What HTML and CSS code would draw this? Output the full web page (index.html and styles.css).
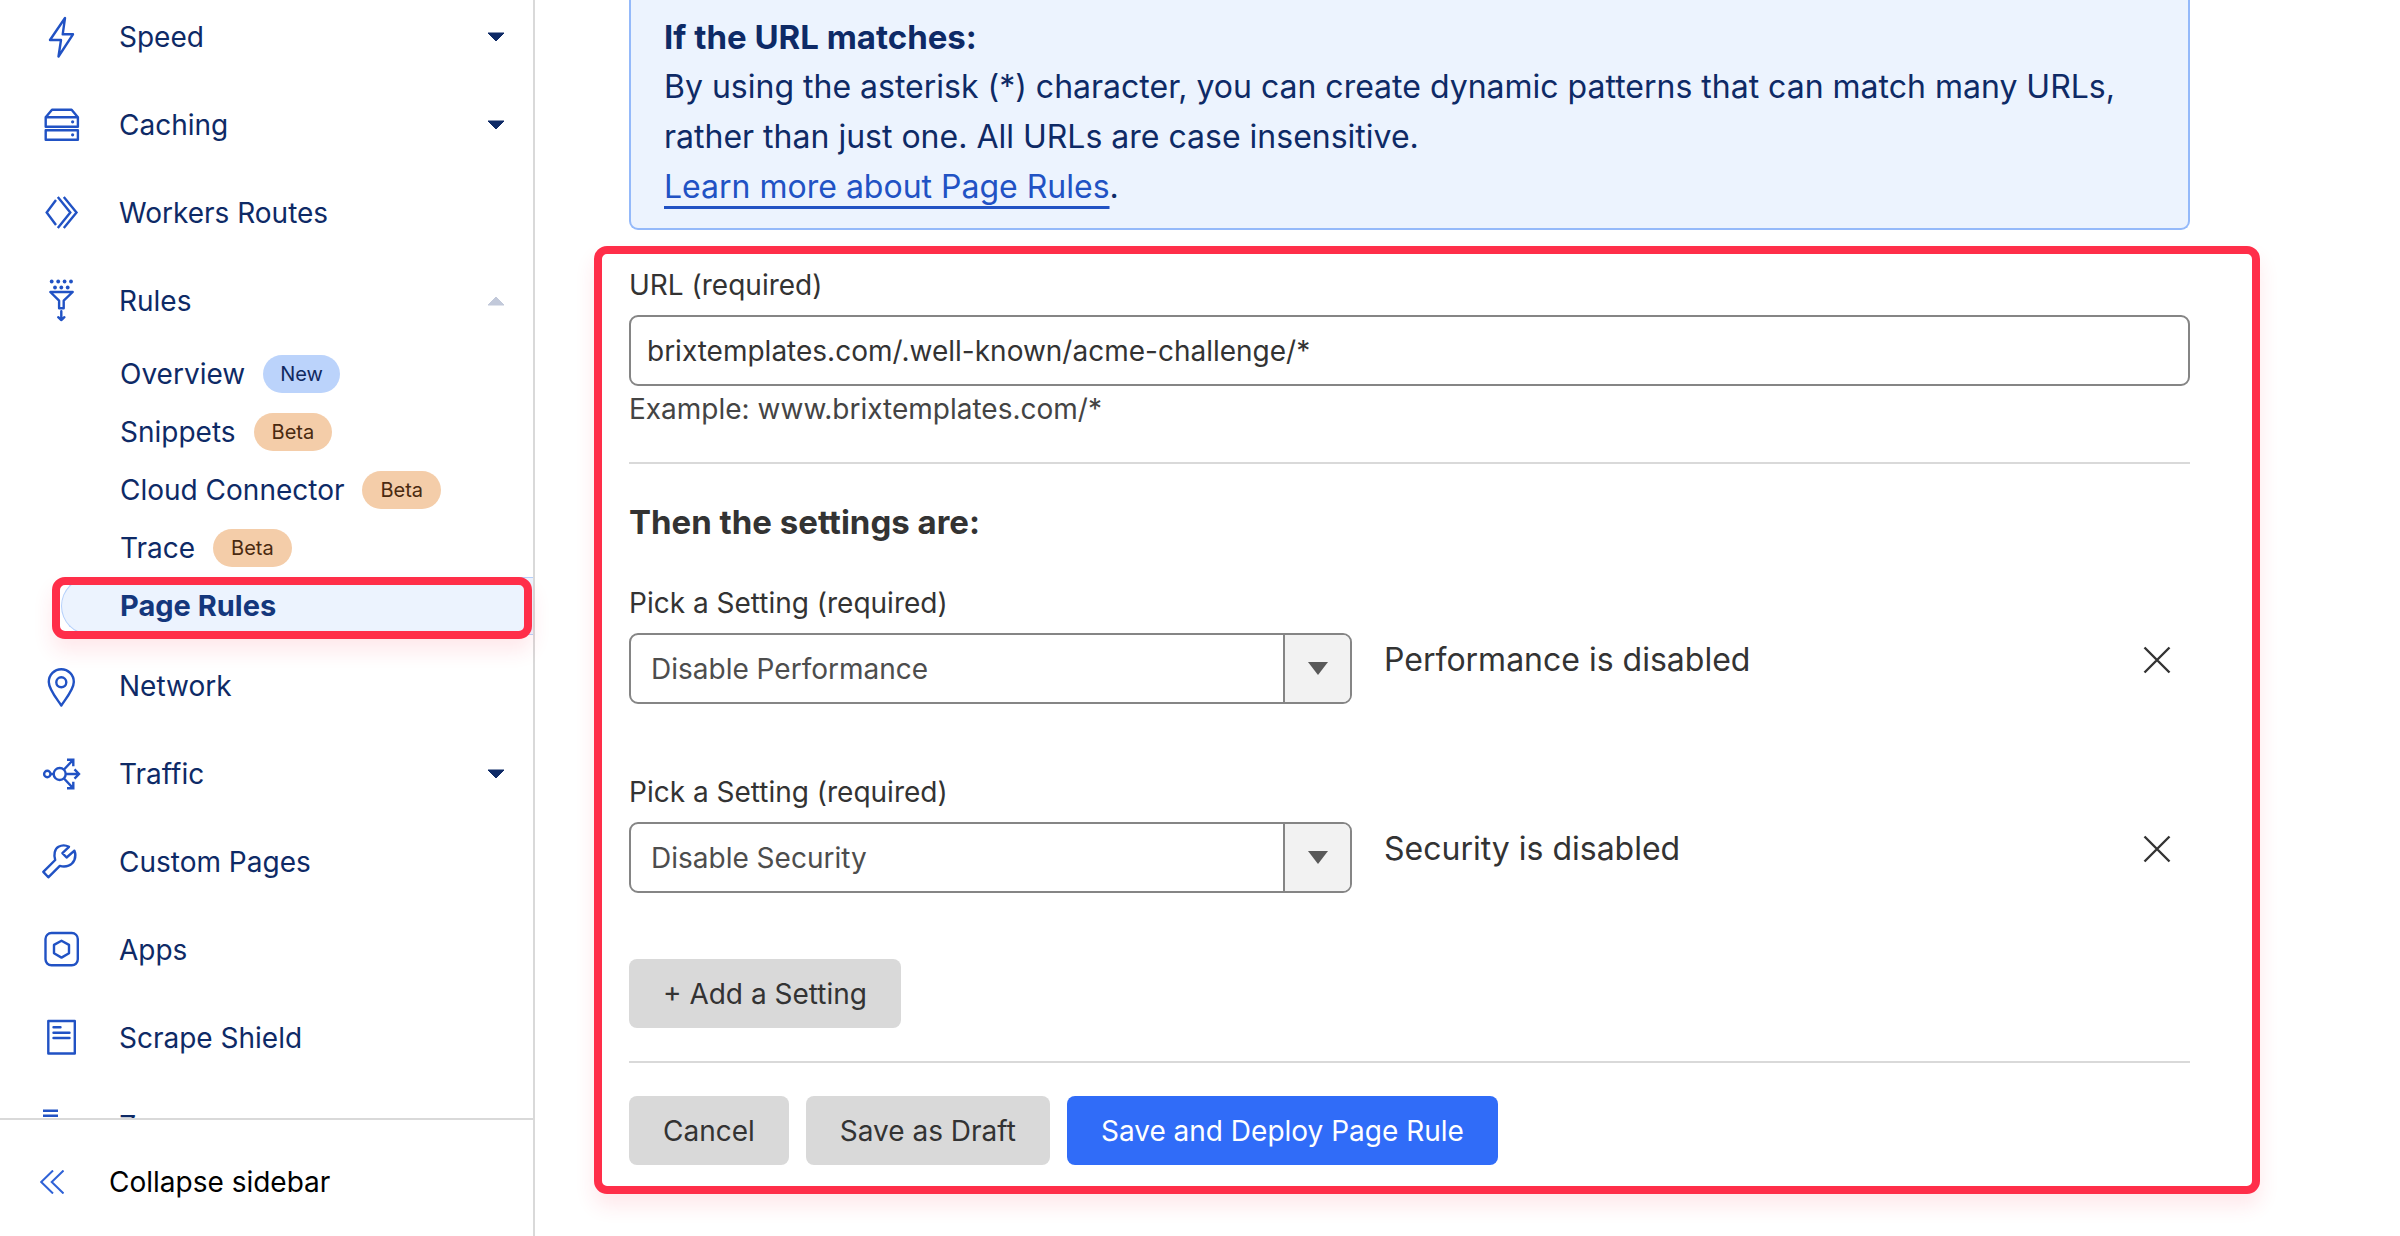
FILE: index.html
```html
<!DOCTYPE html>
<html lang="en">
<head>
<meta charset="utf-8">
<meta name="viewport" content="width=device-width, initial-scale=1">
<title>Page Rules</title>
<link rel="stylesheet" href="styles.css">
</head>
<body>
<div class="app">
  <aside class="sidebar">
    <nav class="nav" aria-label="Zone">
      <ul class="nav-list">
        <li>
          <button class="nav-row" type="button" aria-expanded="false">
            <svg class="icon" viewBox="0 0 44 44"><path d="M26 3 23.7 19.3H34L19.5 41.5 22 25H11z"/></svg>
            <span class="nav-label">Speed</span>
            <svg class="caret" viewBox="0 0 18 10"><path d="M1 1h16L9 9z"/></svg>
          </button>
        </li>
        <li>
          <button class="nav-row" type="button" aria-expanded="false">
            <svg class="icon" viewBox="0 0 44 44"><path d="M6.7 14.3 13 6.7h19.6l6.3 7.6v9.4H6.7zM6.7 14.3h32.2M6.7 27.3h32.2v9.4H6.7z"/><circle class="solid" cx="33.6" cy="18.8" r="1.6"/><circle class="solid" cx="33.6" cy="31.8" r="1.6"/></svg>
            <span class="nav-label">Caching</span>
            <svg class="caret" viewBox="0 0 18 10"><path d="M1 1h16L9 9z"/></svg>
          </button>
        </li>
        <li>
          <a class="nav-row" href="#workers">
            <svg class="icon icon-flat" viewBox="0 0 44 44"><path d="M17 9 7.7 21.5 17 34M18.8 6l12.5 15.5L18.8 37M24.8 6l12.7 15.5L24.8 37"/></svg>
            <span class="nav-label">Workers Routes</span>
          </a>
        </li>
        <li>
          <button class="nav-row" type="button" aria-expanded="true">
            <svg class="icon" viewBox="0 0 44 44"><g class="solid"><circle cx="12.7" cy="2.5" r="1.9"/><circle cx="19.2" cy="2.5" r="1.9"/><circle cx="25.6" cy="2.5" r="1.9"/><circle cx="32" cy="2.5" r="1.9"/><circle cx="16" cy="8.5" r="1.9"/><circle cx="22.3" cy="8.5" r="1.9"/><circle cx="28.7" cy="8.5" r="1.9"/></g><path d="M11.3 13h22.4l-9 8.7v7.6h-4.6v-7.6zM22.3 32.3V41M19.2 38.2l3.1 2.8 3.1-2.8"/></svg>
            <span class="nav-label">Rules</span>
            <svg class="caret caret-open" viewBox="0 0 18 10"><path d="M1 9h16L9 1z"/></svg>
          </button>
          <ul class="subnav">
            <li><a class="sub-row" href="#overview">Overview <span class="badge badge-new">New</span></a></li>
            <li><a class="sub-row" href="#snippets">Snippets <span class="badge badge-beta">Beta</span></a></li>
            <li><a class="sub-row" href="#connector">Cloud Connector <span class="badge badge-beta">Beta</span></a></li>
            <li><a class="sub-row" href="#trace">Trace <span class="badge badge-beta">Beta</span></a></li>
            <li class="current"><a class="sub-row" href="#page-rules" aria-current="page">Page Rules</a></li>
          </ul>
        </li>
        <li>
          <a class="nav-row" href="#network">
            <svg class="icon" viewBox="0 0 44 44"><path d="M22.3 41.5C18 35 9.8 25.5 9.8 18a12.5 12.8 0 0 1 25 0c0 7.5-8.2 17-12.5 23.5z"/><circle cx="22.3" cy="18.3" r="5"/></svg>
            <span class="nav-label">Network</span>
          </a>
        </li>
        <li>
          <button class="nav-row" type="button" aria-expanded="false">
            <svg class="icon icon-flat" viewBox="0 0 44 44"><circle cx="8.3" cy="22" r="3.2"/><circle cx="20.7" cy="22" r="6"/><path d="M11.5 22h3.2M26.7 22h13M35.5 17.3l4.5 4.7-4.5 4.7M25 17.5l9.3-9.8M28 7.7h6.3v6.6M25 26.5l9.3 9.8M28 36.3h6.3v-6.6"/></svg>
            <span class="nav-label">Traffic</span>
            <svg class="caret" viewBox="0 0 18 10"><path d="M1 1h16L9 9z"/></svg>
          </button>
        </li>
        <li>
          <a class="nav-row" href="#custom-pages">
            <svg class="icon" viewBox="0 0 44 44"><path d="M16.2 20 4.3 31.9l5 5.4L20.8 25.9C27 27.6 33 25.5 35.4 20c1.3-3 1.2-6.5 0-9.3l-7.8 6.8-4.2-4.4 6.6-6.3c-3-1.6-7.5-1.7-10.5 0C15.5 9 14.6 15 16.2 20z"/></svg>
            <span class="nav-label">Custom Pages</span>
          </a>
        </li>
        <li>
          <a class="nav-row" href="#apps">
            <svg class="icon" viewBox="0 0 44 44"><rect x="6.5" y="5" width="32.3" height="32.3" rx="6"/><path d="m22.5 12.8 7.5 4.1v8.4l-7.5 4.3-7.5-4.3v-8.4z"/></svg>
            <span class="nav-label">Apps</span>
          </a>
        </li>
        <li>
          <a class="nav-row" href="#scrape-shield">
            <svg class="icon" viewBox="0 0 44 44"><path d="M9.3 5h26.5v32.5H9.3z"/><path d="M14.5 11.2h7M14.5 16.7h16M14.5 22h16"/></svg>
            <span class="nav-label">Scrape Shield</span>
          </a>
        </li>
        <li>
          <a class="nav-row" href="#zaraz">
            <svg class="icon icon-flat" viewBox="0 0 44 44"><path d="M4 6.7h15M4 11.7h15M4 22h34M4 30h24"/></svg>
            <span class="nav-label">Zaraz</span>
          </a>
        </li>
      </ul>
    </nav>
    <button class="collapse" type="button">
      <svg class="collapse-icon" viewBox="0 0 24 24"><path d="M13 .5 1.2 12 13 23.5M23.5 .5 11.7 12l11.8 11.5"/></svg>
      Collapse sidebar
    </button>
  </aside>

  <main class="main">
    <section class="notice">
      <h2 class="notice-title">If the URL matches:</h2>
      <p>By using the asterisk (*) character, you can create dynamic patterns that can match many URLs, rather than just one. All URLs are case insensitive.</p>
      <p><a class="notice-link" href="#learn">Learn more about Page Rules</a>.</p>
    </section>

    <form class="rule-form">
      <label class="label" for="url">URL (required)</label>
      <input class="input" id="url" type="text" value="brixtemplates.com/.well-known/acme-challenge/*" aria-describedby="url-hint">
      <p class="hint" id="url-hint">Example: www.brixtemplates.com/*</p>

      <hr class="rule">

      <h3 class="form-title">Then the settings are:</h3>
      <div class="settings">
        <div class="setting">
          <div class="field">
            <label class="label" for="setting-1">Pick a Setting (required)</label>
            <div class="select">
              <select class="select-control" id="setting-1"><option>Disable Performance</option></select>
              <span class="select-arrow"><svg viewBox="0 0 20 13"><path d="M0 0h20L10 13z"/></svg></span>
            </div>
          </div>
          <p class="effect">Performance is disabled</p>
          <button class="remove" type="button" aria-label="Remove setting"><svg viewBox="0 0 28 28"><path d="M1.5 1.5l25 25M26.5 1.5l-25 25"/></svg></button>
        </div>
        <div class="setting">
          <div class="field">
            <label class="label" for="setting-2">Pick a Setting (required)</label>
            <div class="select">
              <select class="select-control" id="setting-2"><option>Disable Security</option></select>
              <span class="select-arrow"><svg viewBox="0 0 20 13"><path d="M0 0h20L10 13z"/></svg></span>
            </div>
          </div>
          <p class="effect">Security is disabled</p>
          <button class="remove" type="button" aria-label="Remove setting"><svg viewBox="0 0 28 28"><path d="M1.5 1.5l25 25M26.5 1.5l-25 25"/></svg></button>
        </div>
      </div>
      <button class="btn" type="button">+ Add a Setting</button>

      <hr class="rule">

      <div class="actions">
        <button class="btn" type="button">Cancel</button>
        <button class="btn" type="button">Save as Draft</button>
        <button class="btn btn-primary" type="submit">Save and Deploy Page Rule</button>
      </div>
    </form>
  </main>
</div>
</body>
</html>
```
FILE: styles.css
```css
:root {
  --navy: #0e2a66;
  --blue: #2152c4;
  --pale: #ecf3fe;
  --red: #ff2e49;
  --line: #d9d9d9;
  --text: #333;
  --glow: 0 12px 20px rgba(255, 46, 73, .11);
}

* { box-sizing: border-box; }

body {
  margin: 0;
  background: #fff;
  color: var(--text);
  font: 28px/40px Inter, "Liberation Sans", sans-serif;
}

h2, h3, p, ul { margin: 0; padding: 0; }
ul { list-style: none; }
a { color: inherit; text-decoration: none; }
button, input, select { font: inherit; color: inherit; }
button { cursor: pointer; }
svg { display: block; fill: none; }

.app { display: flex; min-height: 100vh; }

/* Sidebar */
.sidebar {
  display: flex;
  flex-direction: column;
  flex: 0 0 535px;
  height: 100vh;
  border-right: 2px solid var(--line);
  color: var(--navy);
}

.nav {
  flex: 1;
  min-height: 0;
  overflow-x: visible;
  overflow-y: clip;
}

/* The list sits slightly scrolled inside the sidebar. */
.nav-list { margin-top: -7px; }

.nav-row {
  display: flex;
  align-items: center;
  gap: 36px;
  width: 100%;
  height: 88px;
  padding: 0 28px 0 39px;
  border: 0;
  background: none;
  text-align: left;
}
.nav-label { flex: 1; }

.icon {
  width: 44px;
  height: 44px;
  stroke: var(--blue);
  stroke-width: 2.4;
  stroke-linejoin: round;
  stroke-linecap: round;
}
.icon-flat { stroke-linecap: butt; stroke-linejoin: miter; }
.solid { fill: var(--blue); stroke: none; }

.caret {
  width: 18px;
  height: 10px;
  fill: var(--navy);
  stroke: var(--navy);
  stroke-linejoin: round;
}
.caret-open { fill: #c2c9da; stroke: #c2c9da; }

.subnav { padding-bottom: 7px; }
.sub-row {
  display: flex;
  align-items: center;
  gap: 18px;
  height: 58px;
  padding-left: 120px;
}

.badge {
  padding: 0 17px;
  border-radius: 19px;
  font-size: 20px;
  line-height: 38px;
}
.badge-new { background: #bbd3fb; color: #10295f; }
.badge-beta { padding: 0 18px; background: #f4cda9; color: #4a2a10; }

.current { position: relative; padding-left: 61px; }
.current .sub-row {
  padding-left: 58px;
  border: 1px solid #b5d0fb;
  border-right: 0;
  border-radius: 29px 0 0 29px;
  background: var(--pale);
  color: #14377c;
  font-size: 29px;
  font-weight: 700;
}
.current::after {
  content: "";
  position: absolute;
  inset: 0 1px -4px 52px;
  border: 8px solid var(--red);
  border-radius: 13px;
  box-shadow: var(--glow);
  pointer-events: none;
}

.collapse {
  display: flex;
  align-items: center;
  gap: 45px;
  height: 118px;
  padding: 8px 40px 0;
  border: 0;
  border-top: 2px solid var(--line);
  background: #fff;
  color: #000;
}
.collapse-icon {
  width: 24px;
  height: 24px;
  stroke: #2f62d6;
  stroke-width: 2;
}

/* Content */
.main {
  flex: 1;
  min-width: 0;
  padding: 0 140px 42px 59px;
}

.notice {
  margin: 0 70px 16px 35px;
  padding: 12px 33px 16px;
  border: 2px solid #94b9fa;
  border-top: 0;
  border-radius: 0 0 9px 9px;
  background: var(--pale);
  color: var(--navy);
  font-size: 32px;
  line-height: 50px;
}
.notice-title { font-size: 33px; font-weight: 700; line-height: 50px; }
.notice-link {
  color: var(--blue);
  text-decoration: underline 3px;
  text-underline-offset: 8px;
  text-decoration-skip-ink: none;
}

.rule-form {
  padding: 11px 62px 21px 27px;
  border: 8px solid var(--red);
  border-radius: 13px;
  box-shadow: var(--glow);
}

.label { display: block; margin-bottom: 10px; }

.input,
.select-control {
  display: block;
  width: 100%;
  height: 71px;
  border: 2px solid #858585;
  border-radius: 9px;
  background: #fff;
}
.input { padding: 0 16px; }
.hint { margin-top: 3px; color: #444; }

.rule {
  margin: 33px 0;
  border: 0;
  border-top: 2px solid var(--line);
}

.form-title {
  margin-bottom: 36px;
  font-size: 33px;
  font-weight: 700;
  line-height: 50px;
}

.settings {
  display: flex;
  flex-direction: column;
  gap: 68px;
  margin-bottom: 66px;
}
.setting { display: flex; align-items: flex-start; }
.field { flex: 0 1 723px; }

.select { position: relative; }
.select-control {
  appearance: none;
  padding: 0 84px 0 20px;
  color: #4d4d4d;
}
.select-arrow {
  position: absolute;
  inset: 2px 2px 2px auto;
  display: grid;
  place-items: center;
  width: 67px;
  border-left: 2px solid #858585;
  border-radius: 0 7px 7px 0;
  background: #f2f2f2;
  pointer-events: none;
}
.select-arrow svg { width: 20px; height: 13px; fill: #595959; }

.effect {
  flex: 1;
  margin: 52px 0 0 32px;
  font-size: 32px;
  line-height: 50px;
}
.remove {
  display: grid;
  place-items: center;
  width: 66px;
  height: 50px;
  margin-top: 52px;
  padding: 0;
  border: 0;
  background: none;
}
.remove svg { width: 28px; height: 28px; stroke: #333; stroke-width: 2.4; }

.actions { display: flex; gap: 17px; }
.btn {
  display: block;
  height: 69px;
  padding: 0 34px;
  border: 0;
  border-radius: 8px;
  background: #d9d9d9;
}
.btn-primary { background: #306cf8; color: #fff; }
```
